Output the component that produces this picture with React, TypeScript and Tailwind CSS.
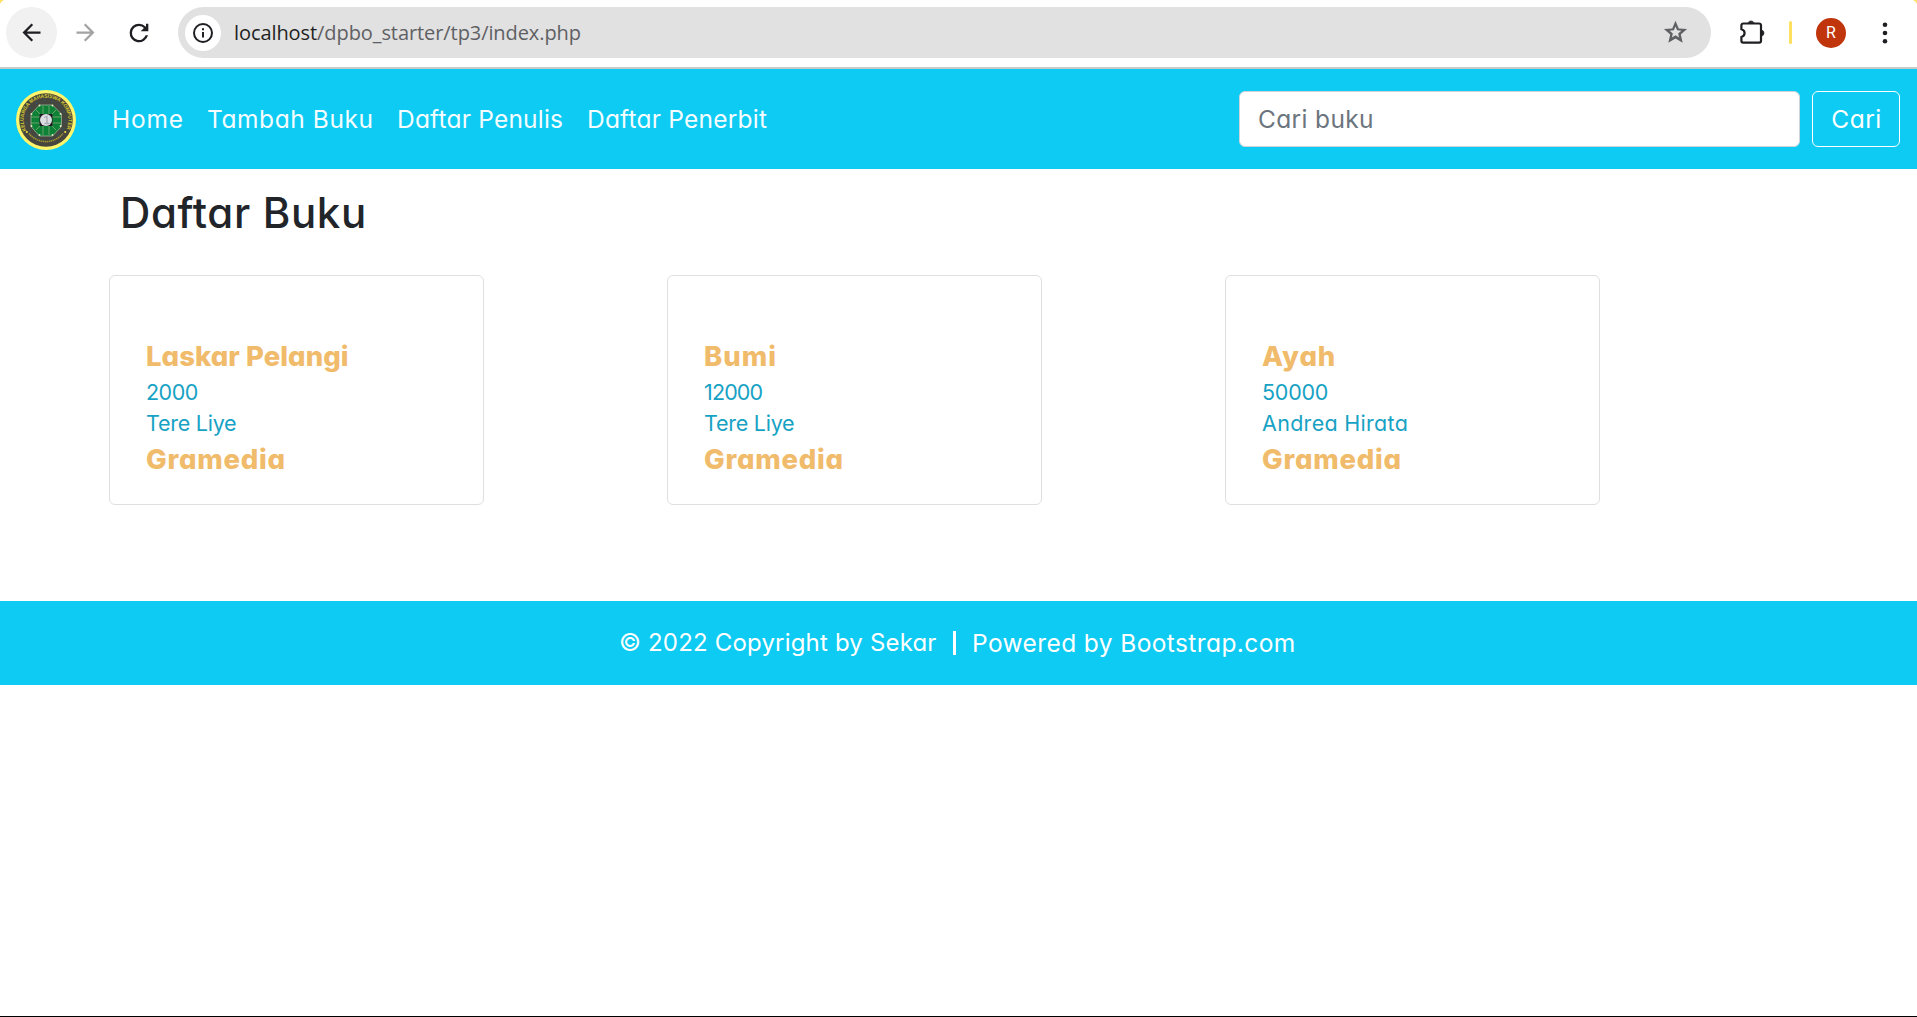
import type { ReactNode } from 'react';

type Book = { title: string; price: string; author: string; publisher: string; titleTracking: string; priceTracking: string; authorTracking: string };

const books: Book[] = [
  { title: 'Laskar Pelangi', price: '2000', author: 'Tere Liye', publisher: 'Gramedia', titleTracking: 'tracking-[0.05px]', priceTracking: 'tracking-[-0.5px]', authorTracking: 'tracking-[-0.25px]' },
  { title: 'Bumi', price: '12000', author: 'Tere Liye', publisher: 'Gramedia', titleTracking: 'tracking-[1px]', priceTracking: 'tracking-[-0.85px]', authorTracking: 'tracking-[-0.25px]' },
  { title: 'Ayah', price: '50000', author: 'Andrea Hirata', publisher: 'Gramedia', titleTracking: 'tracking-[0.8px]', priceTracking: 'tracking-[-0.25px]', authorTracking: 'tracking-[0.3px]' },
];

const links = [
  { label: 'Home', box: 'w-[95px]', tracking: 'tracking-[0.8px]' },
  { label: 'Tambah Buku', box: 'w-[190px]', tracking: 'tracking-[0.58px]' },
  { label: 'Daftar Penulis', box: 'w-[190px]', tracking: 'tracking-[0.2px]' },
  { label: 'Daftar Penerbit', box: 'w-[190px]', tracking: 'tracking-[0.22px]' },
];

function Glyph({ children, className }: { children: ReactNode; className: string }) {
  return (
    <svg viewBox="0 0 24 24" className={className} fill="currentColor">
      {children}
    </svg>
  );
}

function BrowserBar() {
  return (
    <div className="relative flex h-[69px] items-start border-b-2 border-[#c9c9c9] bg-white pt-[7px] pl-1.5">
      <svg className="absolute top-0 left-0 size-1" viewBox="0 0 4 4"><path d="M0 0h4Q1 1 0 4z" fill="#ffdf5e" /></svg>
      <svg className="absolute top-0 right-0 size-1" viewBox="0 0 4 4"><path d="M4 0H0Q3 1 4 4z" fill="#ffdf5e" /></svg>
      <div className="flex size-[51px] shrink-0 items-center justify-center rounded-full bg-[#f1f1f1] text-[#1f1f23]">
        <Glyph className="size-[27px]"><path d="M20 11H7.83l5.59-5.59L12 4l-8 8 8 8 1.41-1.41L7.83 13H20v-2z" /></Glyph>
      </div>
      <div className="ml-[15px] flex h-[51px] w-7 shrink-0 items-center text-[#a3a3a3]">
        <Glyph className="size-[27px]"><path d="M12 4l-1.41 1.41L16.17 11H4v2h12.17l-5.58 5.59L12 20l8-8z" /></Glyph>
      </div>
      <div className="ml-[25px] flex h-[51px] w-7 shrink-0 items-center text-[#1f1f23]">
        <Glyph className="size-[28px]"><path d="M17.65 6.35A7.95 7.95 0 0 0 12 4a8 8 0 1 0 7.73 10h-2.08A6 6 0 1 1 12 6c1.66 0 3.14.69 4.22 1.78L13.5 10.5H20V4h-2v2.7z" /></Glyph>
      </div>
      <div className="ml-[25px] flex h-[51px] w-[1533px] shrink-0 items-center rounded-full bg-[#e1e1e1] pr-[22px] pl-[7px]">
        <div className="flex size-9 items-center justify-center rounded-full bg-white text-[#1f1f23]">
          <svg viewBox="0 0 20 20" className="size-5" fill="none" stroke="currentColor">
            <circle cx="10" cy="10" r="9" strokeWidth="2" />
            <path d="M10 9v5.4M10 5.2v2" strokeWidth="2" />
          </svg>
        </div>
        <div className="ml-[13px] font-['Open_Sans',sans-serif] text-[20px] leading-7 tracking-[-0.08px] text-[#5f6063]">
          <span className="text-[#1f1f23]">localhost</span>/dpbo_starter/tp3/index.php
        </div>
        <Glyph className="ml-auto size-[27px] text-[#5f6063]">
          <path d="M12 1.5l2.9 6.85 7.4.64-5.6 4.87 1.68 7.24L12 17.25 5.62 21.1l1.68-7.24L1.7 8.99l7.4-.64L12 1.5zm0 5.1l-1.45 3.45-3.75.32 2.85 2.46-.86 3.67L12 14.55l3.21 1.95-.86-3.67 2.85-2.46-3.75-.32L12 6.6z" />
        </Glyph>
      </div>
      <div className="ml-[26px] flex h-[51px] shrink-0 items-center">
        <svg viewBox="0 0 28 28" className="size-7 text-[#1f1f23]">
          <path d="M6.200 4.500h16a1.800 1.800 0 0 1 1.800 1.800v15.500a1.800 1.800 0 0 1-1.800 1.800h-16a1.800 1.800 0 0 1-1.800-1.800v-3.800c2-.5 3.200-2 3.200-3.900s-1.200-3.400-3.200-3.900V6.300A1.800 1.800 0 0 1 6.200 4.500z" fill="none" stroke="currentColor" strokeWidth="2.200" />
          <path d="M11 3.800a3.200 2.900 0 0 1 6 0zM24.600 11a3.200 3.200 0 0 1 0 6.200z" fill="currentColor" stroke="currentColor" strokeWidth=".6" />
        </svg>
        <div className="ml-6 h-[23px] w-[3px] rounded-sm bg-[#ffdf5e]" />
        <div className="ml-6 flex size-[30px] items-center justify-center rounded-full bg-[#c0350c] font-[Roboto,sans-serif] text-[16px] leading-none text-white">R</div>
        <svg viewBox="0 0 6 22" className="ml-9 h-[22px] w-1.5 fill-[#1f1f23]">
          <circle cx="3" cy="2.7" r="2.3" /><circle cx="3" cy="11" r="2.3" /><circle cx="3" cy="19.3" r="2.3" />
        </svg>
      </div>
    </div>
  );
}

function Logo() {
  return (
    <svg viewBox="0 0 60 60" className="mt-0.5 size-[60px] shrink-0">
      <defs>
        <path id="upper" d="M10.2 40.5A22.400 22.400 0 1 1 49.8 40.5" />
      </defs>
      <circle cx="30" cy="30" r="30" fill="#fff56b" />
      <circle cx="30" cy="30" r="26.800" fill="#47463e" />
      <circle cx="30" cy="30" r="19.500" fill="none" stroke="#345663" strokeWidth="2" strokeDasharray="3 5" opacity=".5" />
      <text fontSize="5.200" fontWeight="700" fill="#d6c92e" fontFamily="Liberation Sans, sans-serif" textLength="90" lengthAdjust="spacingAndGlyphs">
        <textPath href="#upper" textLength="90" lengthAdjust="spacingAndGlyphs">KELUARGA MAHASISWA KOMPUTER</textPath>
      </text>
      <path d="M13 43.500A21.900 21.900 0 0 0 47 43.500" fill="none" stroke="#a79c2d" strokeWidth="1.600" strokeDasharray="1.3 .7" />
      <circle cx="10.800" cy="42" r="1" fill="#f5e83a" /><circle cx="49.200" cy="42" r="1" fill="#f5e83a" />
      <path d="M23.500 15h13L45.500 24v12.500L36.500 46h-13L15 36.500V24z" fill="#0d8136" stroke="#87a287" strokeWidth="1" />
      <path d="M27 16v9M33 16v9M27 35v10M33 35v10M15 27h9M15 33h9M36 27h9M36 33h9M20 20l4 4v3M40 20l-4 4v3M20 40l4-4v-3M40 40l-4-4v-3" fill="none" stroke="#a9bd91" strokeWidth=".6" />
      <g fill="#f0ecc4">
        <circle cx="23.500" cy="15.500" r=".9" /><circle cx="36.500" cy="15.500" r=".9" />
        <circle cx="15.500" cy="24" r=".9" /><circle cx="15.500" cy="36" r=".9" />
        <circle cx="44.500" cy="24" r=".9" /><circle cx="44.500" cy="36" r=".9" />
        <circle cx="23.500" cy="45" r=".9" /><circle cx="36.500" cy="45" r=".9" />
      </g>
      <path d="M23.500 24h13v12h-13z" fill="#17191c" />
      <circle cx="30" cy="30" r="6" fill="#dcdde2" />
      <path d="M28 27.500l3-1v7M28.500 33.500h5" fill="none" stroke="#a7a9b2" strokeWidth="1.300" />
    </svg>
  );
}

function Navbar() {
  return (
    <nav className="flex h-[100px] items-center bg-[#0dcbf2] pr-[17px] pl-4 text-[24.5px]">
      <Logo />
      <div className="ml-9 flex leading-9 text-[#f5fcff]">
        {links.map((l) => (
          <a key={l.label} className={`${l.box} ${l.tracking} whitespace-nowrap`}>{l.label}</a>
        ))}
      </div>
      <div className="ml-auto flex gap-3">
        <input
          placeholder="Cari buku"
          className="h-14 w-[561px] rounded-md border border-[#ced4da] bg-white px-[18px] tracking-[0.35px] outline-none placeholder:text-[#6c757d] placeholder:opacity-100"
        />
        <button className="h-14 w-[88px] rounded-md border border-white pl-px tracking-[0.5px] text-white">Cari</button>
      </div>
    </nav>
  );
}

function BookCard({ book }: { book: Book }) {
  return (
    <article className="h-[230px] w-[375px] rounded-md border border-[#dfdfdf] bg-white pt-[60px] pl-9 whitespace-nowrap">
      <h2 className={`text-[27.5px] leading-[41px] font-extrabold text-[#f0bb6b] ${book.titleTracking}`}>{book.title}</h2>
      <p className={`text-[21.5px] leading-[31px] text-[#17a2c4] ${book.priceTracking}`}>{book.price}</p>
      <p className={`text-[21.5px] leading-[31px] text-[#17a2c4] ${book.authorTracking}`}>{book.author}</p>
      <p className="text-[27.5px] leading-[41px] font-extrabold tracking-[0.75px] text-[#f0bb6b]">{book.publisher}</p>
    </article>
  );
}

export default function App() {
  return (
    <div className="flex h-[1017px] w-[1917px] flex-col overflow-hidden border-b border-black bg-white font-[Inter,sans-serif] [font-feature-settings:'cv11']">
      <BrowserBar />
      <Navbar />
      <main className="h-[432px] pt-5 pl-[109px]">
        <h1 className="pl-[11px] text-[42px] leading-[48px] font-medium tracking-[0.67px] text-[#212529]">Daftar Buku</h1>
        <div className="mt-[38px] flex gap-[183px]">
          {books.map((b) => <BookCard key={b.title} book={b} />)}
        </div>
      </main>
      <footer className="flex h-[84px] items-center bg-[#0dcbf2] pl-[619px] text-[24.5px] whitespace-nowrap text-white">
        <span className="w-[334px] text-2xl tracking-[0.18px]">© 2022 Copyright by Sekar</span>
        <span className="h-6 w-[3px] bg-white" />
        <span className="ml-4 tracking-[0.4px]">Powered by Bootstrap.com</span>
      </footer>
    </div>
  );
}
